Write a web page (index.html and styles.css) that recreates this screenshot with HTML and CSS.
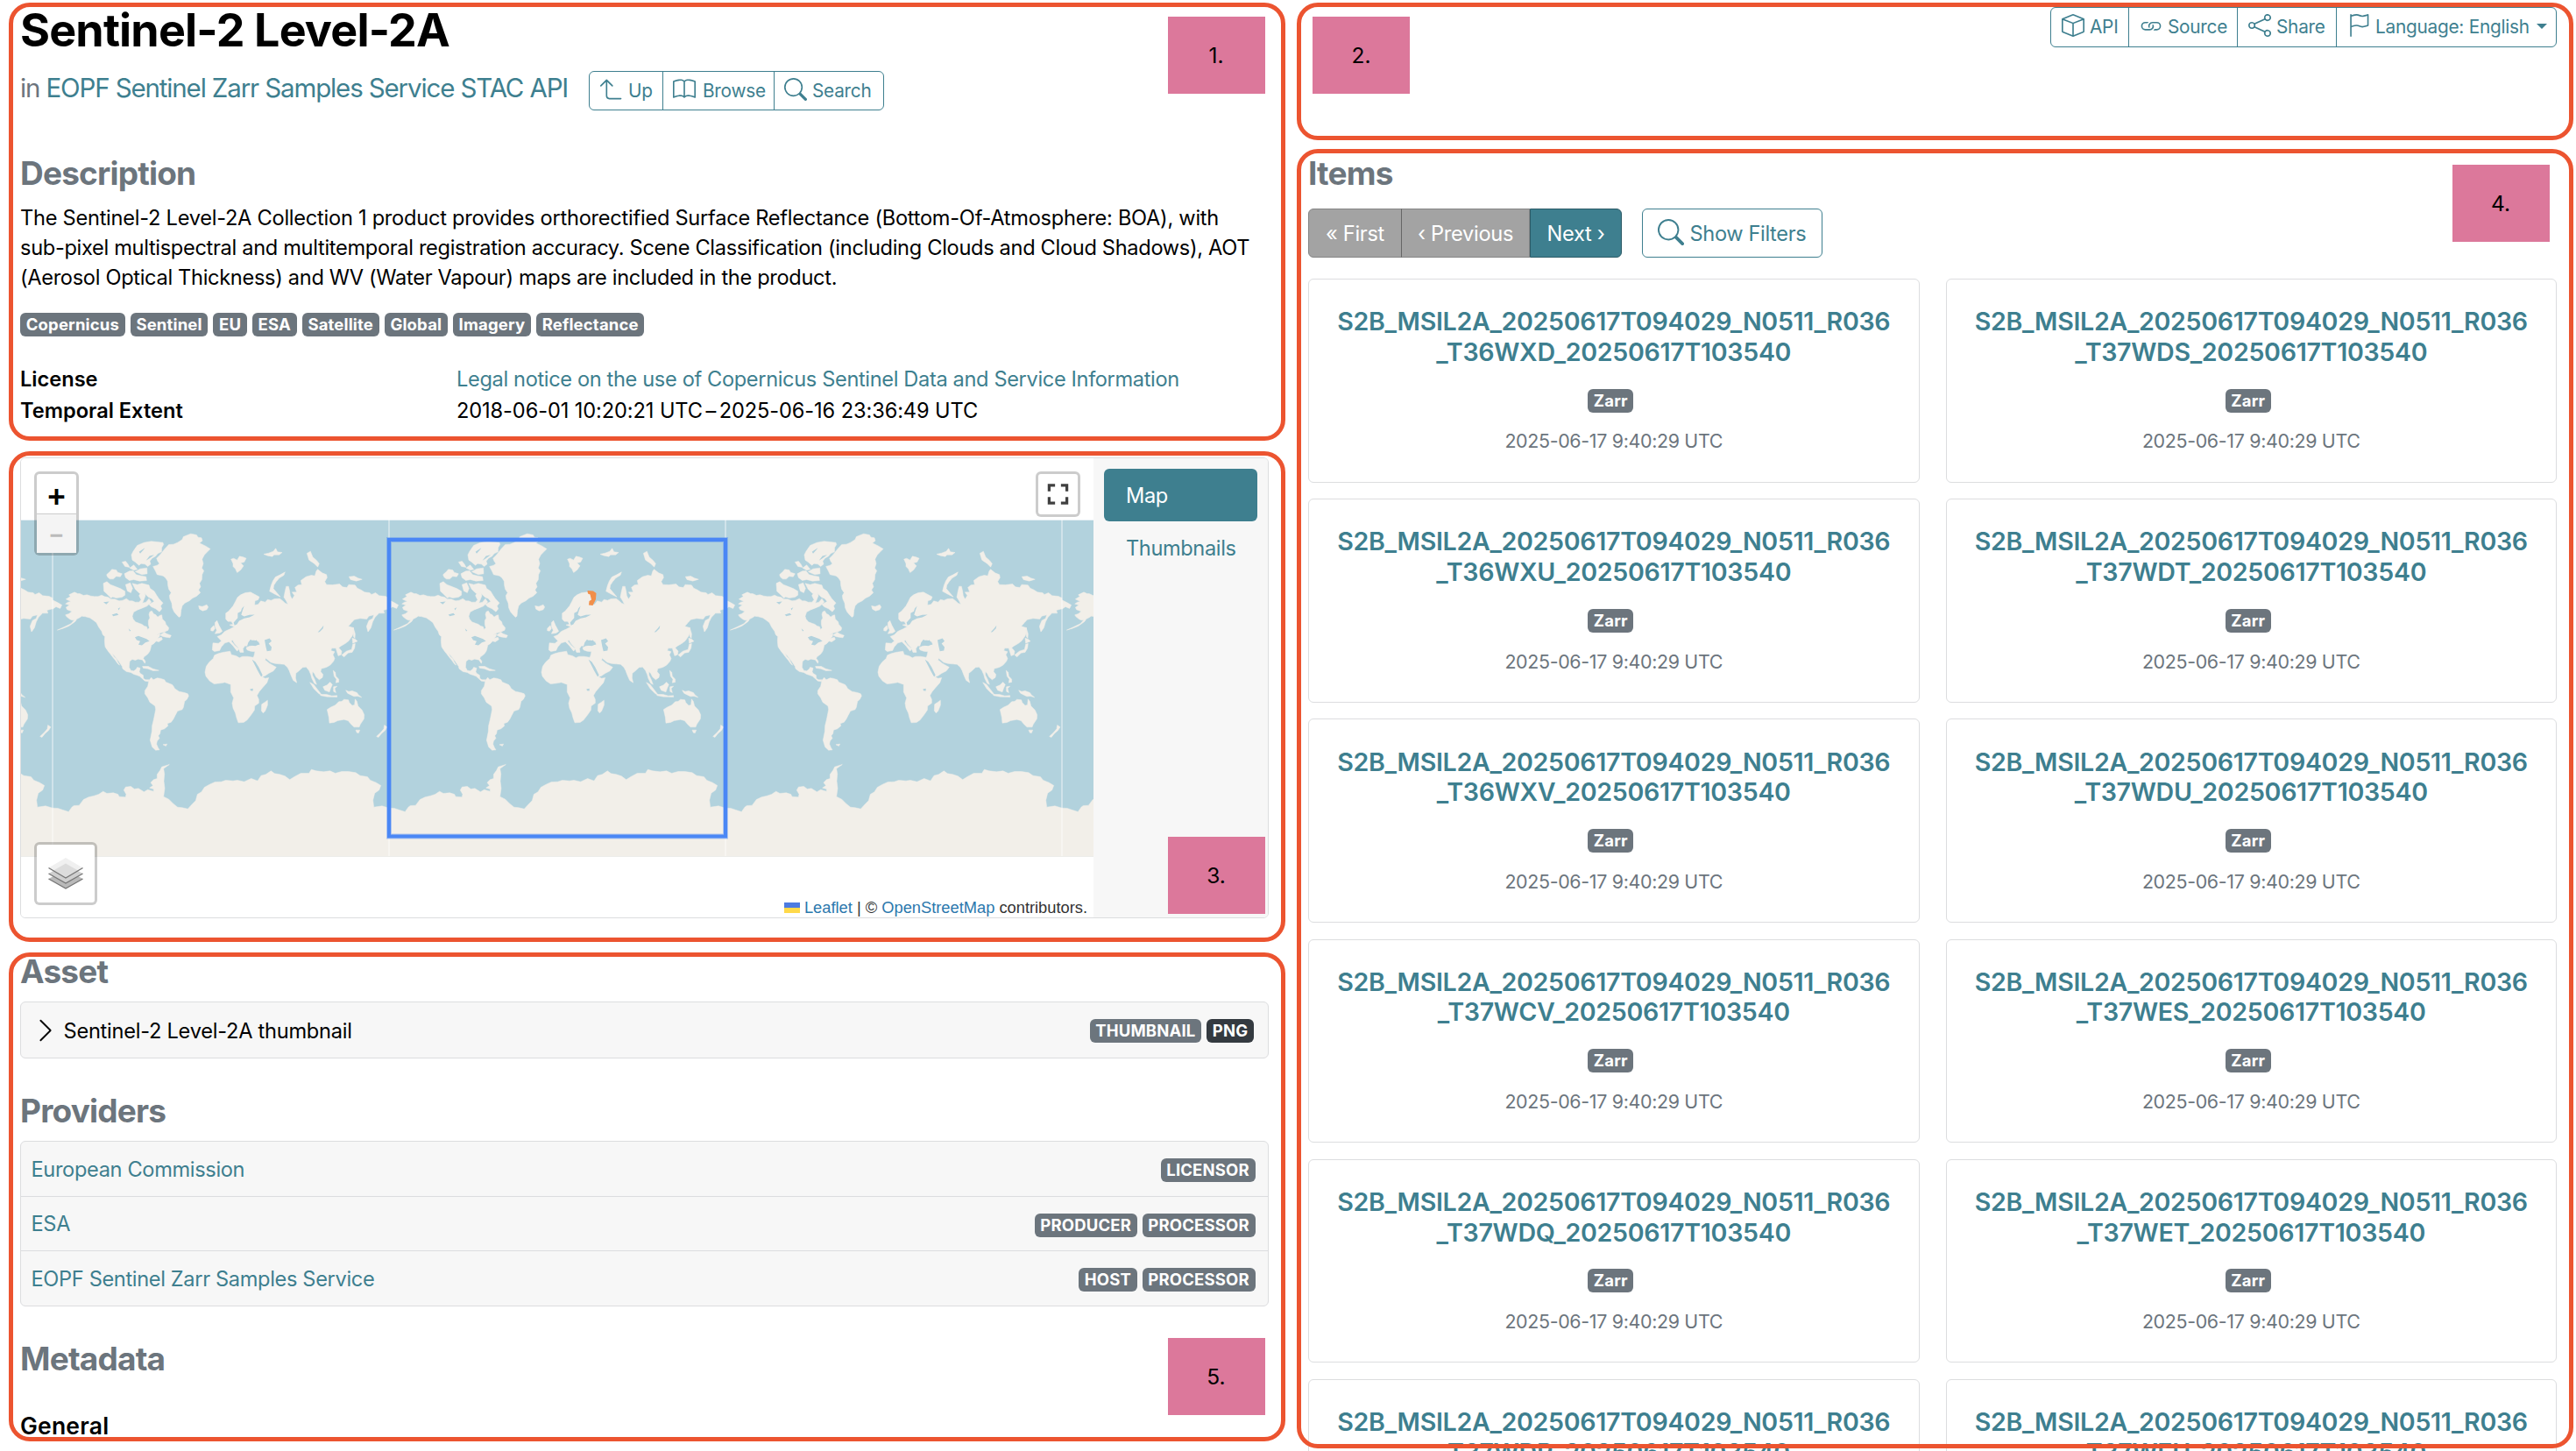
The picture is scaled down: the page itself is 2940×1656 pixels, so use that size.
FILE: index.html
```html
<!DOCTYPE html>
<html lang="en">
<head>
<meta charset="utf-8">
<title>Sentinel-2 Level-2A</title>
<link rel="stylesheet" href="styles.css">
</head>
<body>
<svg class="defs" aria-hidden="true">
  <symbol id="i-search" viewBox="0 0 16 16"><path d="M11.742 10.344a6.5 6.5 0 1 0-1.397 1.398h-.001q.044.06.098.115l3.85 3.85a1 1 0 0 0 1.415-1.414l-3.85-3.85a1 1 0 0 0-.115-.1zM12 6.5a5.5 5.5 0 1 1-11 0 5.5 5.5 0 0 1 11 0"/></symbol>
  <symbol id="i-up" viewBox="0 0 16 16"><path d="M4.854 1.146a.5.5 0 0 0-.708 0l-4 4a.5.5 0 1 0 .708.708L4 2.707V12.5A2.5 2.5 0 0 0 6.5 15h8a.5.5 0 0 0 0-1h-8A1.5 1.5 0 0 1 5 12.5V2.707l3.146 3.147a.5.5 0 1 0 .708-.708z"/></symbol>
  <symbol id="i-book" viewBox="0 0 16 16"><path d="M1 2.828c.885-.37 2.154-.769 3.388-.893 1.33-.134 2.458.063 3.112.752v9.746c-.935-.53-2.12-.603-3.213-.493-1.18.12-2.37.461-3.287.811zm7.5-.141c.654-.689 1.782-.886 3.112-.752 1.234.124 2.503.523 3.388.893v9.923c-.918-.35-2.107-.692-3.287-.81-1.094-.111-2.278-.039-3.213.492zM8 1.783C7.015.936 5.587.81 4.287.94c-1.514.153-3.042.672-3.994 1.105A.5.5 0 0 0 0 2.5v11a.5.5 0 0 0 .707.455c.882-.4 2.303-.881 3.68-1.02 1.409-.142 2.59.087 3.223.877a.5.5 0 0 0 .78 0c.633-.79 1.814-1.019 3.222-.877 1.378.139 2.8.62 3.681 1.02A.5.5 0 0 0 16 13.5v-11a.5.5 0 0 0-.293-.455c-.952-.433-2.48-.952-3.994-1.105C10.413.809 8.985.936 8 1.783"/></symbol>
  <symbol id="i-box" viewBox="0 0 16 16"><path d="M8.186 1.113a.5.5 0 0 0-.372 0L1.846 3.5 8 5.961 14.154 3.5zM15 4.239l-6.5 2.6v7.922l6.5-2.6V4.24zM7.5 14.762V6.838L1 4.239v7.923zM7.443.184a1.5 1.5 0 0 1 1.114 0l7.129 2.852A.5.5 0 0 1 16 3.5v8.662a1 1 0 0 1-.629.928l-7.185 2.874a.5.5 0 0 1-.372 0L.63 13.09a1 1 0 0 1-.63-.928V3.5a.5.5 0 0 1 .314-.464z"/></symbol>
  <symbol id="i-link" viewBox="0 0 16 16"><path d="M6.354 5.5H4a3 3 0 0 0 0 6h3a3 3 0 0 0 2.83-4H9q-.13 0-.25.031A2 2 0 0 1 7 10.5H4a2 2 0 1 1 0-4h1.535c.218-.376.495-.714.82-1z"/><path d="M9 5.5a3 3 0 0 0-2.83 4h1.098A2 2 0 0 1 9 6.5h3a2 2 0 1 1 0 4h-1.535a4 4 0 0 1-.82 1H12a3 3 0 1 0 0-6z"/></symbol>
  <symbol id="i-share" viewBox="0 0 16 16"><path d="M13.5 1a1.5 1.5 0 1 0 0 3 1.5 1.5 0 0 0 0-3M11 2.5a2.5 2.5 0 1 1 .603 1.628l-6.718 3.12a2.5 2.5 0 0 1 0 1.504l6.718 3.12a2.5 2.5 0 1 1-.488.876l-6.718-3.12a2.5 2.5 0 1 1 0-3.256l6.718-3.12A2.5 2.5 0 0 1 11 2.5m-8.5 4a1.5 1.5 0 1 0 0 3 1.5 1.5 0 0 0 0-3m11 5.5a1.5 1.5 0 1 0 0 3 1.5 1.5 0 0 0 0-3"/></symbol>
  <symbol id="i-flag" viewBox="0 0 16 16"><path d="M14.778.085A.5.5 0 0 1 15 .5V8a.5.5 0 0 1-.314.464L14.5 8l.186.464-.003.001-.006.003-.023.009a12 12 0 0 1-.397.15c-.264.095-.631.223-1.047.35-.816.252-1.879.523-2.71.523-.847 0-1.548-.28-2.158-.525l-.028-.01C7.68 8.71 7.14 8.5 6.5 8.5c-.7 0-1.638.23-2.437.477A20 20 0 0 0 3 9.342V15.5a.5.5 0 0 1-1 0V.5a.5.5 0 0 1 1 0v.282c.226-.079.496-.17.79-.26C4.606.272 5.67 0 6.5 0c.84 0 1.524.277 2.121.519l.043.018C9.286.788 9.828 1 10.5 1c.7 0 1.638-.23 2.437-.477a20 20 0 0 0 1.349-.476l.019-.007.004-.002h.001M14 1.221c-.22.078-.48.167-.766.255-.81.252-1.872.523-2.734.523-.886 0-1.592-.286-2.203-.534l-.008-.003C7.662 1.21 7.139 1 6.5 1c-.669 0-1.606.229-2.415.478A21 21 0 0 0 3 1.845v6.433c.22-.078.48-.167.766-.255C4.576 7.77 5.638 7.5 6.5 7.5c.847 0 1.548.28 2.158.525l.028.01C9.32 8.29 9.86 8.5 10.5 8.5c.668 0 1.606-.229 2.415-.478A21 21 0 0 0 14 7.655V1.222z"/></symbol>
  <symbol id="i-chevron" viewBox="0 0 16 16"><path d="M4.646 1.646a.5.5 0 0 1 .708 0l6 6a.5.5 0 0 1 0 .708l-6 6a.5.5 0 0 1-.708-.708L10.293 8 4.646 2.354a.5.5 0 0 1 0-.708"/></symbol>
</svg>

<div class="page">
  <div class="column">
    <section class="frame frame-about">
      <span class="marker marker-tr">1.</span>
      <h1>Sentinel-2 Level-2A</h1>
      <div class="subtitle">
        <p class="parent">in <a>EOPF Sentinel Zarr Samples Service STAC API</a></p>
        <div class="btn-group">
          <a class="btn w-up"><svg class="icon"><use href="#i-up"/></svg>Up</a>
          <a class="btn w-browse"><svg class="icon"><use href="#i-book"/></svg>Browse</a>
          <a class="btn w-search"><svg class="icon"><use href="#i-search"/></svg>Search</a>
        </div>
      </div>
      <h2 class="h-description">Description</h2>
      <p class="description"><span class="wide">The Sentinel-2 Level-2A Collection 1 product provides orthorectified Surface Reflectance (Bottom-Of-Atmosphere: BOA), with</span><br>sub-pixel multispectral and multitemporal registration accuracy. Scene Classification (including Clouds and Cloud Shadows), AOT<br>(Aerosol Optical Thickness) and WV (Water Vapour) maps are included in the product.</p>
      <div class="tags">
        <span class="badge">Copernicus</span><span class="badge">Sentinel</span><span class="badge">EU</span><span class="badge">ESA</span><span class="badge">Satellite</span><span class="badge">Global</span><span class="badge">Imagery</span><span class="badge">Reflectance</span>
      </div>
      <dl class="facts">
        <dt>License</dt><dd><a>Legal notice on the use of Copernicus Sentinel Data and Service Information</a></dd>
        <dt>Temporal Extent</dt><dd class="extent">2018-06-01 10:20:21 UTC<span class="dash">–</span>2025-06-16 23:36:49 UTC</dd>
      </dl>
    </section>

    <section class="frame frame-map">
      <span class="marker marker-map">3.</span>
      <div class="map-card">
        <div class="map">
          <svg class="world" viewBox="0 0 1224 524">
            <defs>
              <g id="land" stroke-linejoin="round">
                <g fill="#f2efe9" stroke="#f2efe9" stroke-width="1.5">
                  <path d="M118 312L133 303 128 297 147 288 158 293 165 293 178 299 190 297 203 301 215 303 228 303 240 298 250 303 262 305 272 312 285 312 300 318 312 316 325 310 335 318 345 318 355 322 368 322 375 314 368 300 374 290 385 285 390 300 380 325 392 322 402 310 410 322 395 336 378 343 365 348 350 356 345 370 348 380 356 390 370 395 378 398 386 404 394 406 398 416 403 410 400 398 400 385 405 376 402 364 405 355 412 352 418 362 425 365 432 373 440 367 446 366 448 380 458 390 460 398 470 410 468 418 455 424 440 428 428 434 440 430 438 440 432 446 445 442 448 450 436 458 426 456 420 463 410 470 408 480 405 490 398 500 385 510 383 515 390 525 388 532 380 520 365 517 355 521 345 518 336 525 334 545 340 556 350 558 358 552 362 545 372 548 369 560 372 566 382 572 383 583 390 588 402 588 400 594 388 592 380 585 370 576 360 572 350 569 340 563 325 560 312 550 310 542 300 527 284 506 276 498 282 508 290 516 296 528 302 538 296 534 286 520 276 508 270 500 262 490 252 475 250 455 251 440 244 434 240 422 230 408 222 392 210 383 200 376 185 372 172 370 165 375 155 380 150 388 142 394 128 404 108 412 88 418 110 408 135 396 146 384 138 384 130 380 120 372 116 366 128 362 138 354 122 348 118 340 130 332 116 328 125 322 135 320z"/>
                  <path d="M402 590L410 580 417 588 430 582 440 583 455 588 460 596 470 600 482 605 487 612 490 618 505 628 524 632 535 636 538 643 532 655 524 662 520 682 516 690 500 695 492 710 486 722 478 733 465 738 467 746 455 756 442 760 440 772 434 780 438 788 430 798 428 808 433 820 438 828 425 829 413 818 406 795 412 765 413 745 418 725 422 705 425 690 423 678 405 665 398 650 388 636 388 625 398 610z"/>
                  <path d="M440 160L456 140 470 125 486 124 500 118 516 108 520 98 545 88 565 92 570 100 582 102 585 112 575 120 596 130 612 140 602 150 592 160 584 175 588 190 583 205 590 215 584 228 583 245 575 258 579 270 572 280 578 290 565 302 552 308 540 318 525 325 516 335 512 350 510 370 505 374 497 366 488 355 482 342 480 325 474 312 472 300 478 290 470 278 467 265 466 250 458 238 450 232 430 228 424 215 416 200 430 196 438 190 432 182 428 172z"/>
                  <path d="M342 160L348 148 355 138 362 128 385 118 410 114 430 116 450 118 452 125 446 135 445 150 432 156 425 165 412 172 405 182 408 192 398 200 388 192 375 190 368 196 355 185 345 178z"/>
                  <path d="M257 228L268 218 275 210 290 212 295 220 310 225 304 235 290 234 280 243 268 243 260 236zM310 185L322 182 330 192 336 203 320 200zM336 205L350 195 362 210 350 213zM318 225L335 216 348 215 358 228 375 232 392 235 394 248 370 250 350 245 335 248 322 238zM246 258L258 252 270 262 290 270 305 276 320 285 320 298 310 305 290 308 278 304 272 308 258 294 248 285zM345 258L362 262 378 258 402 264 406 275 420 285 428 298 436 310 450 325 442 335 446 345 438 355 425 345 410 338 402 330 420 320 412 310 400 305 385 290 370 292 355 278zM322 262L338 256 346 275 340 290 328 284zM355 218L372 208 395 205 396 225 378 228zM352 332L368 328 378 340 366 346 354 342zM440 435L455 425 462 430 478 436 474 444 460 442 450 440z"/>
                  <path d="M572 335L585 337 600 331 605 339 600 348 586 352 575 346zM683 175L692 172 704 178 712 165 725 168 735 172 728 185 716 188 726 198 716 212 704 221 698 208 690 200 690 190zM795 158L812 154 828 148 836 138 842 150 858 152 848 160 830 160 825 166 808 163zM815 285L820 265 826 250 835 236 852 228 868 219 864 230 848 240 838 252 830 264 828 276 840 290 852 304 835 296zM943 155L955 148 963 168 975 178 985 190 980 202 968 190 950 178zM1087 235L1105 233 1118 240 1132 244 1112 250 1092 245z"/>
                  <path d="M678 400L690 398 684 388 672 388 665 380 665 360 674 354 690 335 698 320 705 306 716 297 732 290 750 288 765 296 780 304 776 314 765 318 764 332 776 330 785 318 800 322 808 313 820 316 832 311 850 310 860 318 868 325 878 330 872 318 864 305 868 285 872 268 880 268 884 285 886 300 892 312 900 300 892 288 908 288 902 272 912 264 925 262 922 248 940 235 958 230 970 232 975 215 980 210 995 222 1010 228 1012 238 1004 252 1010 262 1030 263 1055 260 1065 270 1080 272 1086 262 1108 264 1115 274 1128 280 1140 288 1158 290 1164 296 1178 290 1190 300 1212 302 1224 308 1224 345 1205 350 1208 360 1190 360 1176 374 1168 390 1162 410 1152 424 1147 405 1155 385 1168 378 1172 366 1155 370 1148 380 1125 378 1105 382 1096 392 1085 405 1102 410 1102 428 1098 438 1086 455 1074 464 1060 472 1052 478 1062 490 1060 502 1050 506 1045 490 1042 480 1028 480 1025 488 1038 492 1032 502 1038 515 1034 525 1022 538 1010 545 992 550 990 560 998 570 996 580 985 588 974 578 968 566 962 560 962 572 970 588 976 604 968 600 960 584 956 570 950 556 940 544 928 546 915 558 905 566 904 582 908 598 896 590 888 572 882 556 876 545 865 535 850 534 832 532 818 528 802 514 800 520 815 532 838 545 828 558 812 566 800 574 790 578 784 562 770 545 755 520 762 505 765 492 750 490 738 486 735 478 745 473 762 470 782 468 778 458 762 452 750 452 742 464 740 472 730 472 724 482 726 494 714 494 708 478 695 464 688 452 684 456 696 470 710 482 704 490 690 472 676 458 662 462 650 475 644 488 626 491 619 486 621 462 640 463 650 455 636 440 650 434 662 422 680 414 694 406z"/>
                  <path d="M640 498L655 494 680 490 684 502 700 506 712 513 722 508 740 508 758 511 762 525 775 548 782 568 788 577 800 583 812 581 806 598 792 614 780 628 772 642 778 655 778 668 764 678 763 692 752 708 738 726 726 734 708 735 702 718 698 702 690 685 687 668 692 650 682 630 682 604 662 597 645 600 625 602 610 592 597 576 594 562 598 542 608 528 622 515 626 504z"/>
                  <path d="M635 385L642 402 653 422 644 428 628 430 634 418 628 405 628 392zM614 412L624 402 628 412 622 421 614 420zM788 672L800 664 808 658 808 675 800 695 793 702 787 694zM1062 503L1078 490 1096 484 1100 466 1108 464 1106 480 1098 494 1084 496 1070 510zM1098 445L1110 450 1116 456 1100 463zM1101 408L1108 430 1107 446 1102 440zM953 597L966 604 980 622 992 638 984 636 966 618zM988 638L1010 638 1028 643 1046 642 1046 647 1012 646 990 642zM998 612L1012 606 1022 596 1030 604 1024 618 1020 630 1004 624zM1034 612L1046 610 1038 618 1042 632 1034 628zM1076 624L1086 628 1098 626 1114 632 1120 640 1130 648 1116 644 1104 645 1094 640 1082 634zM1033 556L1040 562 1042 576 1052 586 1052 596 1042 598 1044 586 1036 576z"/>
                  <path d="M1012 690L1024 682 1040 675 1052 663 1062 662 1070 655 1085 657 1088 666 1098 676 1106 674 1108 654 1114 662 1118 678 1132 692 1139 708 1138 722 1126 740 1122 750 1104 750 1092 738 1084 728 1070 724 1048 728 1036 734 1020 736 1018 716zM1110 760L1124 760 1120 770 1114 769zM1181 782L1196 768 1206 756 1208 743 1218 750 1210 762 1198 772 1188 785zM72 315L90 324 104 332 98 344 84 338 72 346zM380 542L400 542 415 550 436 556 416 557 398 550 382 548zM450 810L464 808 460 815z"/>
                  <path d="M72 1027L90 1028 108 1034 127 1040 138 1024 145 1019 163 1018 178 998 195 990 215 985 230 980 245 970 258 977 280 975 296 980 300 988 322 990 324 980 316 966 322 955 340 953 352 962 366 960 385 972 398 964 418 970 418 962 404 958 416 950 408 940 418 930 430 926 430 912 440 898 446 886 472 878 452 892 455 910 453 935 456 960 452 988 470 997 485 1012 500 1024 516 1026 535 1030 550 1014 562 1002 568 980 582 972 592 956 610 946 628 938 650 937 665 932 690 934 705 932 728 937 752 926 774 934 786 916 802 912 820 900 832 909 850 912 868 918 884 930 900 920 922 908 950 908 958 895 975 900 1000 903 1022 900 1040 908 1062 902 1085 902 1110 906 1125 916 1150 920 1160 932 1180 940 1196 950 1190 966 1175 976 1169 1000 1172 1024 1200 1020 1224 1027 1224 1193 72 1193z"/>
                </g>
                <g fill="#b2d2dd">
                  <path d="M728 335L720 344 717 354 706 360 706 376 692 392 695 402 703 398 711 386 728 378 746 374 764 365 746 366 728 371 718 366 722 352zM738 474L742 460 750 450 758 458 770 452 780 466 766 472 750 470zM798 452L815 446 822 456 812 464 822 476 820 488 806 490 802 474zM755 519L766 526 778 545 791 572 786 577 774 556z"/>
                  <path d="M354 442L366 438 378 442 394 448 404 456 390 460 378 470 366 468 372 456 360 452zM275 365L292 360 298 366 280 370zM980 425L992 412 1000 402 998 412 986 424zM748 620L758 618 758 626 750 625zM368 150L388 136 384 142 372 156zM392 180L404 164 420 160 404 172zM296 344L304 340 298 350zM246 322L266 320 256 330zM332 412L340 420 336 422z"/>
                </g>
              </g>
            </defs>
            <rect x="0" y="70.5" width="1224" height="384" fill="#b2d2dd"/>
            <g>
              <use href="#land" transform="translate(-348 70.5) scale(.33333) translate(-72 -41)"/>
              <use href="#land" transform="translate(36 70.5) scale(.33333) translate(-72 -41)"/>
              <use href="#land" transform="translate(420 70.5) scale(.33333) translate(-72 -41)"/>
              <use href="#land" transform="translate(804 70.5) scale(.33333) translate(-72 -41)"/>
              <use href="#land" transform="translate(1188 70.5) scale(.33333) translate(-72 -41)"/>
            </g>
            <path d="M36 70v384M420 70v384M804 70v384M1188 70v384" stroke="#fff" stroke-opacity=".6" stroke-width="1.3"/>
            <path d="M0 70.5h1224" stroke="#fff" stroke-opacity=".4"/>
            <rect x="420" y="93" width="384" height="338.5" fill="none" stroke="#4a87f5" stroke-opacity=".4" stroke-width="6"/>
            <rect x="420" y="93" width="384" height="338.5" fill="none" stroke="#4a87f5" stroke-width="4"/>
            <path d="M646.500 151L653 151.500 656.500 154 656 161 652.500 168 648 167.500 648.500 163 651 161.500 649.500 155.500 647 154.500z" fill="#f28f4a"/>
          </svg>
          <div class="map-control zoom"><span class="plus">+</span><span class="minus">−</span></div>
          <div class="map-control fullscreen">
            <svg viewBox="0 0 26 26"><path d="M2.500 9.500V2.500H9.500M16.500 2.500H23.500V9.500M23.500 16.500V23.500H16.500M9.500 23.500H2.500V16.500" fill="none" stroke="#404040" stroke-width="3.400"/></svg>
          </div>
          <div class="map-control layers">
            <svg viewBox="0 0 40 38">
              <path d="M.5 25L20 14 39.500 25 20 36z" fill="#b9b9b9"/><path d="M.5 25L20 36 39.500 25" fill="none" stroke="#777" stroke-width="1.400"/>
              <path d="M.5 19L20 8 39.500 19 20 30z" fill="#cfcfcf"/><path d="M.5 19L20 30 39.500 19" fill="none" stroke="#777" stroke-width="1.400"/>
              <path d="M.5 12.500L20 1 39.500 12.500 20 24z" fill="#f0f0f0"/><path d="M6 15.500L20 7.500 34 15.500 20 24z" fill="#dcdcdc"/><path d="M.5 12.500L20 24 39.500 12.500" fill="none" stroke="#777" stroke-width="1.400"/>
            </svg>
          </div>
          <div class="attribution"><svg class="ua" viewBox="0 0 18 12"><path d="M0 0h18v6H0z" fill="#4c7be1"/><path d="M0 6h18v6H0z" fill="#ffd94a"/></svg><a>Leaflet</a> | © <a>OpenStreetMap</a> contributors.</div>
        </div>
        <nav class="map-tabs"><a class="tab active">Map</a><a class="tab">Thumbnails</a></nav>
      </div>
    </section>

    <section class="frame frame-details">
      <span class="marker marker-details">5.</span>
      <h2>Asset</h2>
      <div class="asset"><svg class="chevron"><use href="#i-chevron"/></svg><span class="grow">Sentinel-2 Level-2A thumbnail</span><span class="badge">THUMBNAIL</span><span class="badge dark">PNG</span></div>
      <h2 class="h-providers">Providers</h2>
      <ul class="providers">
        <li><a class="grow">European Commission</a><span class="badge">LICENSOR</span></li>
        <li><a class="grow">ESA</a><span class="badge">PRODUCER</span><span class="badge">PROCESSOR</span></li>
        <li><a class="grow">EOPF Sentinel Zarr Samples Service</a><span class="badge">HOST</span><span class="badge">PROCESSOR</span></li>
      </ul>
      <h2 class="h-metadata">Metadata</h2>
      <h3>General</h3>
    </section>
  </div>

  <div class="column column-right">
    <section class="frame frame-actions">
      <span class="marker marker-tl">2.</span>
      <div class="btn-group actions">
        <a class="btn w-api"><svg class="icon"><use href="#i-box"/></svg>API</a>
        <a class="btn w-source"><svg class="icon"><use href="#i-link"/></svg>Source</a>
        <a class="btn w-share"><svg class="icon"><use href="#i-share"/></svg>Share</a>
        <a class="btn w-lang"><svg class="icon"><use href="#i-flag"/></svg>Language: English<i class="caret"></i></a>
      </div>
    </section>

    <section class="frame frame-items">
      <span class="marker marker-items">4.</span>
      <h2 class="h-items">Items</h2>
      <div class="toolbar">
        <div class="pager"><span class="page-btn w-first">« First</span><span class="page-btn w-prev">‹ Previous</span><span class="page-btn next">Next ›</span></div>
        <a class="filters"><svg><use href="#i-search"/></svg>Show Filters</a>
      </div>
      <div class="cards">
        <article class="card"><h4>S2B_MSIL2A_20250617T094029_N0511_R036<br>_T36WXD_20250617T103540</h4><span class="badge">Zarr</span><time>2025-06-17 9:40:29 UTC</time></article>
        <article class="card"><h4>S2B_MSIL2A_20250617T094029_N0511_R036<br>_T37WDS_20250617T103540</h4><span class="badge">Zarr</span><time>2025-06-17 9:40:29 UTC</time></article>
        <article class="card"><h4>S2B_MSIL2A_20250617T094029_N0511_R036<br>_T36WXU_20250617T103540</h4><span class="badge">Zarr</span><time>2025-06-17 9:40:29 UTC</time></article>
        <article class="card"><h4>S2B_MSIL2A_20250617T094029_N0511_R036<br>_T37WDT_20250617T103540</h4><span class="badge">Zarr</span><time>2025-06-17 9:40:29 UTC</time></article>
        <article class="card"><h4>S2B_MSIL2A_20250617T094029_N0511_R036<br>_T36WXV_20250617T103540</h4><span class="badge">Zarr</span><time>2025-06-17 9:40:29 UTC</time></article>
        <article class="card"><h4>S2B_MSIL2A_20250617T094029_N0511_R036<br>_T37WDU_20250617T103540</h4><span class="badge">Zarr</span><time>2025-06-17 9:40:29 UTC</time></article>
        <article class="card"><h4>S2B_MSIL2A_20250617T094029_N0511_R036<br>_T37WCV_20250617T103540</h4><span class="badge">Zarr</span><time>2025-06-17 9:40:29 UTC</time></article>
        <article class="card"><h4>S2B_MSIL2A_20250617T094029_N0511_R036<br>_T37WES_20250617T103540</h4><span class="badge">Zarr</span><time>2025-06-17 9:40:29 UTC</time></article>
        <article class="card"><h4>S2B_MSIL2A_20250617T094029_N0511_R036<br>_T37WDQ_20250617T103540</h4><span class="badge">Zarr</span><time>2025-06-17 9:40:29 UTC</time></article>
        <article class="card"><h4>S2B_MSIL2A_20250617T094029_N0511_R036<br>_T37WET_20250617T103540</h4><span class="badge">Zarr</span><time>2025-06-17 9:40:29 UTC</time></article>
        <article class="card"><h4>S2B_MSIL2A_20250617T094029_N0511_R036<br>_T37WDR_20250617T103540</h4></article>
        <article class="card"><h4>S2B_MSIL2A_20250617T094029_N0511_R036<br>_T37WEU_20250617T103540</h4></article>
      </div>
    </section>
  </div>
</div>
</body>
</html>
```
FILE: styles.css
```css
:root {
  --teal: #3e7f8f;
  --gray: #6c757d;
  --line: #dcdddf;
  --panel: #f7f7f7;
  --mark: #ec5430;
}

* { box-sizing: border-box; margin: 0; padding: 0; }

html { height: 1656px; overflow: hidden; }

body {
  width: 2940px;
  height: 1656px;
  overflow: hidden;
  background: #fff;
  color: #000;
  font: 400 23.6px/34px Inter, "Liberation Sans", sans-serif;
  letter-spacing: -0.0125em;
  white-space: nowrap;
}

a { color: var(--teal); text-decoration: none; }
ul { list-style: none; }
svg { display: block; flex: none; fill: currentColor; }
.defs { position: absolute; width: 0; height: 0; }
.grow { flex: 1; }

.page {
  display: grid;
  grid-template-columns: 1457px 1457px;
  column-gap: 13px;
  height: 1656px;
  padding: 3px 3px 0 10px;
  overflow: hidden;
}

.column { display: flex; flex-direction: column; gap: 12px; }
.column-right { gap: 10px; }

/* Outlined regions: the outline is painted over the content */
.frame { position: relative; flex: none; padding: 0 19px 0 13px; }
.frame::after {
  content: "";
  position: absolute;
  inset: 0;
  z-index: 2;
  border: 5px solid var(--mark);
  border-radius: 24px;
  pointer-events: none;
}
.frame-about { height: 500px; padding-top: 2px; }
.frame-map { height: 560px; padding-top: 7px; }
.frame-details { height: 558px; }
.frame-actions { height: 157px; padding-top: 5px; }
.frame-items { height: 1483px; padding-top: 5.5px; }

.marker {
  position: absolute;
  z-index: 3;
  width: 111px;
  height: 88px;
  background: #dc789b;
  font-size: 24.5px;
  line-height: 88px;
  letter-spacing: 0;
  text-align: center;
}
.marker-tr { top: 15.5px; right: 23.5px; }
.marker-tl { top: 16px; left: 18px; }
.marker-map { top: 440px; right: 23.5px; }
.marker-items { top: 18px; right: 27.5px; }
.marker-details { top: 440px; right: 23.5px; }

h1 { font-size: 52px; line-height: 60px; letter-spacing: -0.016em; }
h2 { color: var(--gray); font-size: 37px; line-height: 44px; letter-spacing: -0.022em; }
h3 { margin-top: 35.5px; font-size: 26.5px; font-weight: 600; line-height: 36px; letter-spacing: 0.008em; }

.subtitle { display: flex; align-items: center; height: 45px; margin-top: 16px; }
.parent {
  width: 649px;
  padding-bottom: 8px;
  color: var(--gray);
  font-size: 29.5px;
  letter-spacing: -0.0385em;
}

.btn-group { display: flex; height: 45px; }
.btn {
  display: flex;
  align-items: center;
  gap: 6px;
  margin-left: -1px;
  padding-left: 11px;
  border: 1.5px solid var(--teal);
  color: var(--teal);
  font-size: 20.8px;
  letter-spacing: -0.012em;
}
.btn:first-child { margin-left: 0; padding-left: 12px; border-radius: 6px 0 0 6px; }
.btn:last-child { border-radius: 0 6px 6px 0; }
.icon { width: 26px; height: 26px; margin-top: -4px; }
.w-up { width: 85px; }
.w-browse { width: 128px; }
.w-browse .icon { margin-right: 2px; }
.w-search { width: 126px; }
.actions { justify-content: flex-end; height: 46px; }
.actions .btn { padding-left: 12px; }
.w-api { width: 90px; }
.w-source { width: 125px; }
.w-share { width: 114px; }
.w-lang { width: 252px; }
.caret {
  margin-left: 2px;
  margin-top: -2px;
  border: 6px solid transparent;
  border-top-color: var(--teal);
  border-bottom: 0;
}

.h-description { margin-top: 49.5px; }
.description { margin-top: 12px; line-height: 34.1px; letter-spacing: -0.0133em; }
.wide { letter-spacing: -0.0107em; }

.badge {
  height: 27px;
  padding: 0 6.7px;
  border-radius: 6px;
  background: var(--gray);
  color: #fff;
  font-size: 18.5px;
  font-weight: 700;
  line-height: 27px;
  letter-spacing: 0.009em;
}
.badge.dark { background: #343a40; }

.tags { display: flex; gap: 6px; margin-top: 23.3px; }
.facts {
  display: grid;
  grid-template-columns: 498px 1fr;
  margin-top: 31.4px;
  line-height: 36px;
  letter-spacing: -0.015em;
}
.facts dt { font-weight: 600; letter-spacing: 0; }
.facts .extent { letter-spacing: -0.004em; }
.dash { margin: 0 3.5px; }

.map-card {
  display: flex;
  height: 526px;
  border: 1.5px solid var(--line);
  border-radius: 6px;
  overflow: hidden;
}
.map { position: relative; width: 1224px; background: #fff; }
.world { width: 1224px; height: 524px; }
.map-control {
  position: absolute;
  background: #fff;
  background-clip: padding-box;
  border: 3px solid rgba(0, 0, 0, 0.2);
  border-radius: 6px;
}
.zoom { left: 15px; top: 15px; width: 51px; height: 96px; color: #000; text-align: center; letter-spacing: 0; }
.zoom span { display: block; height: 45px; font: 700 35px/51px "Liberation Sans", sans-serif; }
.zoom .minus { border-top: 1px solid #ccc; background: #f4f4f4; color: #bbb; font-size: 27px; line-height: 48px; }
.fullscreen { left: 1158px; top: 15px; width: 51px; height: 52px; padding: 10px; }
.fullscreen svg { width: 25px; height: 26px; }
.layers { left: 15px; top: 438px; width: 72px; height: 72px; padding: 14px 13px; }
.layers svg { width: 40px; height: 38px; }
.attribution {
  position: absolute;
  right: 7px;
  bottom: 0;
  color: #333;
  font: 18.3px/22px "Liberation Sans", sans-serif;
  letter-spacing: 0;
}
.attribution a { color: #2b78ad; }
.ua { display: inline-block; width: 18px; height: 12px; margin-right: 5px; }

.map-tabs {
  display: flex;
  flex: 1;
  flex-direction: column;
  padding: 12px 12px;
  background: var(--panel);
}
.tab { height: 60px; padding-left: 25px; border-radius: 6px; line-height: 62px; letter-spacing: -0.016em; }
.tab.active { background: var(--teal); color: #fff; }

.asset, .providers { border: 1.5px solid var(--line); border-radius: 6px; background: var(--panel); }
.asset { display: flex; align-items: center; gap: 6px; height: 65px; margin-top: 12px; padding: 0 16px 0 12.5px; }
.asset .badge { margin-top: 1px; }
.asset .grow { padding-top: 2px; letter-spacing: -0.0105em; }
.chevron { width: 30px; height: 30px; }
.h-providers { margin-top: 38px; }
.providers { margin-top: 12px; }
.providers li { display: flex; align-items: center; gap: 6px; height: 61.5px; padding: 0 14.5px 0 11.5px; }
.providers li + li { height: 62.5px; border-top: 1.5px solid var(--line); }
.providers .grow { padding-top: 2px; letter-spacing: -0.0145em; }
.providers .badge { margin-top: 4px; }
.h-metadata { margin-top: 38.5px; }

.toolbar { display: flex; gap: 23px; height: 56px; margin-top: 18.5px; }
.pager { display: flex; width: 358px; }
.page-btn {
  border: 1.5px solid #858585;
  background: #a3a3a3;
  color: #fff;
  line-height: 56px;
  text-align: center;
}
.w-first { width: 107px; border-radius: 6px 0 0 6px; }
.w-prev { width: 147px; border-left-color: #666; margin-left: -1px; }
.page-btn.next { width: 105px; border-color: #2a5a66; border-radius: 0 6px 6px 0; background: var(--teal); }
.filters {
  display: flex;
  align-items: center;
  gap: 7px;
  width: 206px;
  padding-top: 1px;
  padding-left: 16.5px;
  border: 1.5px solid var(--teal);
  border-radius: 6px;
  letter-spacing: -0.015em;
}
.filters svg { width: 30px; height: 30px; margin-top: -3px; }

.cards {
  display: grid;
  grid-template-columns: 1fr 1fr;
  grid-auto-rows: 232.6px;
  gap: 18.6px 30px;
  margin-top: 24px;
}
.card {
  display: flex;
  flex-direction: column;
  align-items: center;
  padding-top: 31.2px;
  border: 1.5px solid var(--line);
  border-radius: 6px;
}
.card h4 {
  color: var(--teal);
  font-size: 28.6px;
  font-weight: 600;
  line-height: 34.6px;
  letter-spacing: -0.0108em;
  text-align: center;
}
.card .badge { margin: 24.2px 7px 0 0; }
.card time { margin-top: 17.9px; color: var(--gray); font-size: 21.4px; line-height: 30px; letter-spacing: -0.015em; }
```
